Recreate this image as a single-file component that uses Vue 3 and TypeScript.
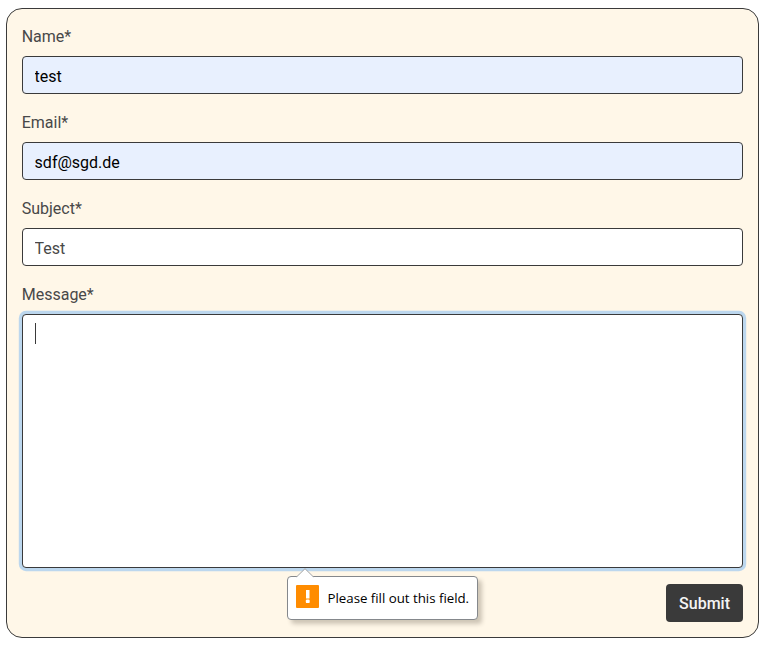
<script setup lang="ts">
import { reactive, ref } from 'vue'

interface Field {
  id: string
  label: string
  type: string
  value: string
  autofilled: boolean
}

const fields = reactive<Field[]>([
  { id: 'name', label: 'Name*', type: 'text', value: 'test', autofilled: true },
  { id: 'email', label: 'Email*', type: 'email', value: 'sdf@sgd.de', autofilled: true },
  { id: 'subject', label: 'Subject*', type: 'text', value: 'Test', autofilled: false },
])
const message = ref('')
</script>

<template>
  <form class="card" novalidate @submit.prevent>
    <div v-for="f in fields" :key="f.id" class="group">
      <label :for="f.id">{{ f.label }}</label>
      <input
        :id="f.id"
        v-model="f.value"
        :type="f.type"
        class="control"
        :class="{ autofilled: f.autofilled }"
        autocomplete="off"
      />
    </div>
    <div class="group">
      <label for="message">Message*</label>
      <div class="area">
        <textarea id="message" v-model="message" class="control message"></textarea>
        <span class="caret"></span>
        <div class="bubble" role="alert">
          <svg class="arrow" width="18" height="10" viewBox="0 0 18 10">
            <path d="M0.5 10 L1 8.5 L9 0.7 L17 8.5 L17.5 10 Z" fill="#fff" />
            <path d="M0.7 8.8 L9 0.7 L17.3 8.8" fill="none" stroke="#a0a2a5" stroke-width="1" />
          </svg>
          <svg class="warn" width="23" height="23" viewBox="0 0 23 23">
            <rect width="23" height="23" rx="1" fill="#ff8c00" />
            <rect x="10" y="5" width="3.5" height="8.5" fill="#fff" />
            <rect x="9.8" y="14.6" width="3.9" height="3.5" rx="1.2" fill="#fff" />
          </svg>
          <span class="hint">Please fill out this field.</span>
        </div>
      </div>
    </div>
    <button type="submit" class="submit">Submit</button>
  </form>
</template>

<style>
body {
  margin: 0;
  background: #fff;
}
</style>

<style scoped>
.card {
  box-sizing: border-box;
  width: 753px;
  margin: 8px 0 0 6px;
  padding: 15px;
  display: flex;
  flex-direction: column;
  gap: 16px;
  border: 1px solid #3a3a3a;
  border-radius: 16px;
  background: #fff7e8;
  color: #484848;
  font: 400 16px/24px Roboto, sans-serif;
}
.group {
  display: flex;
  flex-direction: column;
  gap: 8px;
}
label {
  box-sizing: border-box;
  height: 24px;
  padding-top: 1px;
  margin-left: -0.3px;
}
.control {
  box-sizing: border-box;
  display: block;
  width: 100%;
  height: 38px;
  margin: 0;
  padding: 7px 12px 5px 11.6px;
  border: 1px solid #3a3a3a;
  border-radius: 4px;
  outline: none;
  background: #fff;
  color: #484848;
  font: inherit;
}
.autofilled {
  background: #e8f0fe;
  color: #000;
}
.area {
  position: relative;
}
.message {
  height: 254px;
  resize: none;
  box-shadow: 0 0 0 3.2px #bcd7ee;
}
.caret {
  position: absolute;
  left: 13px;
  top: 9px;
  width: 1px;
  height: 21px;
  background: #3a3a3a;
}
.bubble {
  position: absolute;
  left: 265px;
  top: 262px;
  box-sizing: border-box;
  width: 191px;
  height: 44px;
  padding: 0 8px;
  display: flex;
  align-items: center;
  gap: 8.5px;
  border: 1px solid #85888c;
  border-radius: 4px;
  background: #fff;
  box-shadow: 4px 4px 4px rgba(60, 50, 35, 0.25);
}
.arrow {
  position: absolute;
  left: 8px;
  top: -9px;
}
.warn {
  flex: none;
  margin-top: -3px;
}
.hint {
  color: #000;
  font: 400 13.3px/20px "Open Sans", sans-serif;
  letter-spacing: -0.02px;
  white-space: nowrap;
}
.submit {
  align-self: flex-end;
  height: 38px;
  padding: 2px 13px 0;
  border: 0;
  border-radius: 4px;
  background: #3a3a3a;
  color: #f4f4f4;
  font: 500 16px/24px Roboto, sans-serif;
}
</style>
